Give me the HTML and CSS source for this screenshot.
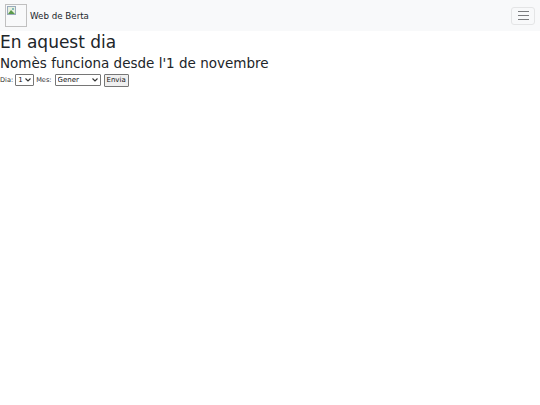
FILE: index.html
```html
<!DOCTYPE html>
<html lang="ca">
<head>
<meta charset="utf-8">
<title>Web de Berta</title>
<link rel="stylesheet" href="styles.css">
</head>
<body>
<nav class="navbar">
  <a class="brand" href="#">
    <span class="logo"><svg width="9" height="9" viewBox="0 0 9 9"><rect x="0.5" y="0.5" width="8" height="8" fill="#e8f0e0" stroke="#9ab"/><path d="M1 8 L4 4 L8 8Z" fill="#5a9a4a"/><circle cx="6" cy="3" r="1" fill="#6aa"/></svg></span>
    <span class="brand-text">Web de Berta</span>
  </a>
  <button class="toggler" type="button" aria-label="menu">
    <span class="bars"><span></span><span></span><span></span></span>
  </button>
</nav>
<h1 class="title">En aquest dia</h1>
<h2 class="subtitle">Nomès funciona desde l'1 de novembre</h2>
<form class="day-form">
  <label class="lbl">Dia:</label>
  <span class="sel-wrap sel-day">
    <select class="sel"><option>1</option></select>
    <svg class="chev" width="6" height="4" viewBox="0 0 6 4"><path d="M0.5 0.5 L3 3 L5.5 0.5" fill="none" stroke="#333" stroke-width="1.1"/></svg>
  </span>
  <label class="lbl">Mes:</label>
  <span class="sel-wrap sel-month">
    <select class="sel"><option>Gener</option></select>
    <svg class="chev" width="6" height="4" viewBox="0 0 6 4"><path d="M0.5 0.5 L3 3 L5.5 0.5" fill="none" stroke="#333" stroke-width="1.1"/></svg>
  </span>
  <button class="send" type="button">Envia</button>
</form>
</body>
</html>
```
FILE: styles.css
```css
html, body { margin: 0; padding: 0; background: #fff; }
body { font-family: "DejaVu Sans", sans-serif; color: #212529; }
.navbar {
  height: 31px;
  background: #f8f9fa;
  display: flex;
  align-items: center;
  justify-content: space-between;
  padding: 0 5px;
}
.brand { display: flex; align-items: center; gap: 3px; text-decoration: none; color: #212529; }
.logo {
  width: 20px; height: 21px;
  border: 1px solid #c0c0c0;
  box-sizing: content-box;
  display: block;
  position: relative;
}
.logo svg { position: absolute; left: 1px; top: 1px; }
.brand-text { font-size: 8.7px; }
.toggler {
  width: 24px; height: 18px;
  border: 1px solid #e4e5e6;
  border-radius: 3px;
  background: transparent;
  padding: 0;
  display: flex; align-items: center; justify-content: center;
}
.bars { display: flex; flex-direction: column; gap: 3px; width: 11px; }
.bars span { display: block; height: 1px; background: #7a7c7e; }
.title { font-size: 17px; font-weight: 400; margin: 1px 0 0; line-height: 21px; }
.subtitle { font-size: 13.5px; font-weight: 400; margin: 1px 0 0; line-height: 18px; }
.day-form { display: flex; align-items: center; margin-top: 1px; height: 14px; font-size: 7px; }
.lbl { font-size: 6.6px; color: #333; }
.sel-wrap { position: relative; display: flex; height: 12px; }
.sel-day { width: 19px; margin: 0 2px; }
.sel-month { width: 46px; margin: 0 3px; }
.sel {
  appearance: none; -webkit-appearance: none;
  width: 100%; height: 12px; box-sizing: border-box;
  font-size: 7px; line-height: 10px; font-family: "DejaVu Sans", sans-serif; color: #111;
  padding: 0 0 0 2px; margin: 0;
  border: 1px solid #767676; border-radius: 1px; background: #fff;
}
.chev { position: absolute; right: 3px; top: 4px; pointer-events: none; }
.send {
  font-size: 7px; font-family: "DejaVu Sans", sans-serif; color: #111;
  width: 25px; height: 13px; padding: 0; margin: 0;
  border: 1px solid #767676; background: #efefef; border-radius: 1px;
}
```
